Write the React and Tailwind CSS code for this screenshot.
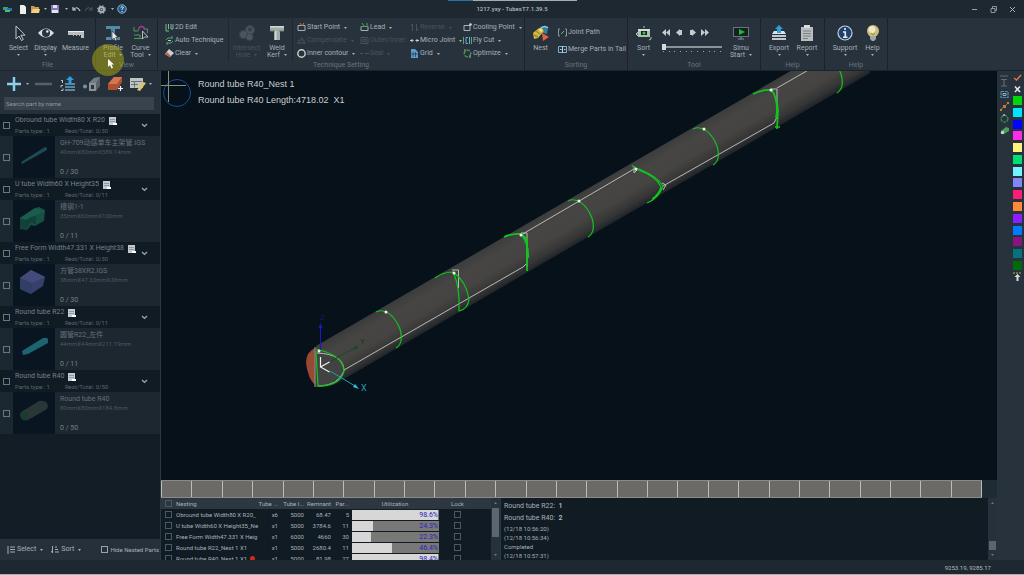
import React from "react";

const Svg = ({ w = 16, h = 16, className = "", children }) => (
  <svg width={w} height={h} viewBox={`0 0 ${w} ${h}`} className={`shrink-0 ${className}`} aria-hidden="true" fill="none">
    {children}
  </svg>
);

const Caret = ({ className = "" }) => (
  <Svg w={3} h={2} className={className}>
    <path d="M0 0h3L1.500 2z" fill="currentColor" />
  </Svg>
);

const Pointer = (
  <path d="M5 1v13l3-3 2.500 4.500 1.800-1-2.400-4.300H14z" fill="#20292f" stroke="#c3c8cb" strokeWidth="1" />
);

const icons = {
  select: Pointer,
  display: (
    <>
      <path d="M0 8Q8-1 16 8Q8 17 0 8z" fill="#d9dcdd" />
      <circle cx="8" cy="8" r="4" fill="#28343d" />
      <circle cx="9.3" cy="6.5" r="1.2" fill="#e8eaea" />
    </>
  ),
  measure: (
    <>
      <path d="M0 6h16v7h-3v-3h-1v1h-1v-1H9v1H8v-1H6v1H5v-1H0z" fill="#b9bdbe" />
      <path d="M0 6h16v1H0z" fill="#eceeee" />
    </>
  ),
  profile: (
    <>
      <path d="M1 1h14v3h-5v8h5v3H1v-3h5V4H1z" fill="#5489a8" />
      <path d="M7 6v9l2-2 1.500 3 1.500-1-1.400-2.700H13z" fill="#e9ecee" stroke="#1b242b" strokeWidth=".6" />
    </>
  ),
  curve: (
    <>
      <path d="M1 2v4h4M1 13.500h9M14.500 8V4h-3" stroke="#4a9c57" />
      <path d="M1 10h6v3.500" stroke="#4a9c57" />
      <path d="M5 6Q6 1 9 1.500Q11.500 2 11.500 5" stroke="#a03a92" strokeWidth="1.400" />
      <path d="M9.500 6v8l2-2h3.500z" fill="#27323c" stroke="#c3c8cb" strokeWidth=".9" />
    </>
  ),
  intersect: (
    <g fill="#4b555e" stroke="#38434c">
      <circle cx="11" cy="5" r="4.500" />
      <circle cx="4.500" cy="9.500" r="4" />
      <circle cx="10.500" cy="12" r="3.500" />
      <circle cx="11" cy="4.500" r="1.800" fill="#333e47" />
    </g>
  ),
  weld: (
    <>
      <path d="M1 1h14v5h-4v9H5V6H1z" fill="#a5aba9" />
      <path d="M1 1h14v1.500H1zM6 6h1.500v9H6z" fill="#d3d6d5" />
      <path d="M1 6h5M10 6h5" stroke="#57886b" />
    </>
  ),
  nest: (
    <>
      <path d="M6 3q5-4 9 0l-1 6-4-1z" fill="#327f9d" />
      <path d="M8 3q4-3 7 0" stroke="#7fcfdf" strokeWidth="1.500" />
      <path d="M0 8l6-5 5 3-6 7-4 1z" fill="#e0b33a" />
      <path d="M3 6l4 3M1 10l4 2" stroke="#7a9b37" strokeWidth="1.500" />
      <circle cx="8" cy="5" r="1.800" fill="#fae27c" />
      <path d="M9 8l7 4-6 4z" fill="#e2643a" />
    </>
  ),
  sort: (
    <>
      <path d="M2 4h12v8H2z" fill="#a9c2ae" />
      <path d="M2 4h12v2H2z" fill="#d2dfd3" />
      <path d="M5 6h6v4H5z" fill="#16261c" />
      <circle cx="8" cy="8" r="1.500" fill="#3cbf5a" />
      <path d="M0 9l2-2v4zM8 1v2M13 15l2-1v-2" stroke="#b5bbbd" />
    </>
  ),
  simu: (
    <>
      <path d="M0 2h16v10H0z" fill="#6b747a" />
      <path d="M1 3h14v8H1z" fill="#14221d" />
      <path d="M6 4l6 3-6 3z" fill="#1fb83c" />
      <path d="M5 14h6M8 12v2" stroke="#89939a" />
    </>
  ),
  export: (
    <>
      <path d="M3 6h10l2 3H1z" fill="#dfe3e4" />
      <path d="M1 10h14v2H1zM1 13h14v2H1z" fill="#c3c8ca" />
      <path d="M8 0l4 4h-2v4H6V4H4z" fill="#2b9ee0" />
    </>
  ),
  report: (
    <>
      <path d="M2 2h12v14H2z" fill="#b9bdbd" />
      <path d="M5 0h6v3H5z" fill="#d9dcdc" />
      <path d="M4 6h8M4 8.500h8M4 11h8M4 13.500h5" stroke="#7a8184" />
    </>
  ),
  support: (
    <>
      <circle cx="8" cy="8" r="7" fill="#1d4168" stroke="#bfd0df" strokeWidth="1.200" />
      <path d="M8 3v2M6 7h2.300v5M6 12.300h4.500" stroke="#e6edf2" strokeWidth="1.600" />
    </>
  ),
  help: (
    <>
      <circle cx="8" cy="6" r="6" fill="#c8bd7c" />
      <circle cx="7" cy="4.500" r="3.500" fill="#ece7c4" />
      <path d="M5 11h6v3l-2 2H7l-2-2z" fill="#9da5aa" />
      <path d="M6 8l2 2 2-2" stroke="#9b8a3a" />
    </>
  ),
};

function BigButton({ icon, lines, caret, disabled, width }) {
  return (
    <button
      type="button"
      disabled={disabled}
      className={`flex flex-col items-center pt-[7px] ${width} ${disabled ? "text-[#48535d]" : "text-[#a9b0b6]"}`}
    >
      <Svg>{icons[icon]}</Svg>
      <span className="mt-[4px] whitespace-nowrap text-center leading-[7px]">
        {lines.map((l, i) => (
          <span key={l} className="block">
            {l}
            {caret && lines.length > 1 && i === lines.length - 1 && <Caret className="ml-1 inline" />}
          </span>
        ))}
      </span>
      {caret && lines.length === 1 && <Caret className="mt-[2px]" />}
    </button>
  );
}

function SmallButton({ icon, label, caret, disabled }) {
  return (
    <button
      type="button"
      disabled={disabled}
      className={`flex h-[13px] items-center gap-px whitespace-nowrap ${disabled ? "text-[#48535d]" : "text-[#a9b0b6]"}`}
    >
      <Svg w={9} h={9}>{icon}</Svg>
      <span>{label}</span>
      {caret && <Caret className="ml-[3px]" />}
    </button>
  );
}

function Group({ caption, width, children }) {
  return (
    <section className={`flex flex-col border-r border-[#1a232b] ${width}`}>
      <div className="flex h-[43px]">{children}</div>
      <h2 className="text-center leading-[9px] text-[#69737c]">{caption}</h2>
    </section>
  );
}

const small = {
  edit: <path d="M1 1v7M3.500 1v5M6 1v5h2V1M1 8h3" stroke="#7fb590" />,
  auto: (
    <>
      <path d="M1 4Q2 1 7 2M8 5Q7 8 2 7M7 0v3M2 9V6" stroke="#4da76a" />
      <path d="M3 4.500h3" stroke="#bcd6c3" />
    </>
  ),
  clear: (
    <>
      <path d="M0 5l4-5 5 4-4 4z" fill="#d6cdca" />
      <path d="M0 5l2-2 4 4-1 1.500z" fill="#b5685e" />
    </>
  ),
  start: (
    <>
      <path d="M1 2.500h7v5H1z" stroke="#a9b0b4" />
      <path d="M3 0l2 3 2-3" stroke="#d07046" />
    </>
  ),
  comp: <path d="M0 7h9M2 7V4h5v3M5 1v3" stroke="#48535d" />,
  inner: <circle cx="4.500" cy="4.500" r="3.700" stroke="#cdd6d0" strokeWidth="1.400" />,
  lead: (
    <>
      <path d="M1 3.500h7v4H1z" stroke="#a9b0b4" />
      <path d="M1 3.500h7M2 0l2 3M7 0v3" stroke="#53a05c" />
    </>
  ),
  outer: <path d="M1 1.500h7v6H1zM3 3.500h3v2H3z" stroke="#48535d" />,
  seal: <path d="M0 4.500h3M5 4.500h4" stroke="#48535d" />,
  reverse: <path d="M2.500 8V1L1 3M6.500 1v7L8 6" stroke="#48535d" />,
  micro: <path d="M0 4.500h3.500M5.500 4.500H9M2 3v3M7 3v3" stroke="#c4cacd" />,
  grid: (
    <>
      <path d="M1 0h4l3 3v6H1z" fill="#5d9ec9" />
      <path d="M3 3v5M5.500 3v5M1 5h7" stroke="#1c3850" strokeWidth=".7" />
    </>
  ),
  cool: (
    <>
      <path d="M1 2.500h6v5H1z" stroke="#a9b0b4" />
      <circle cx="7.500" cy="1.500" r="1.300" fill="#d5dadd" />
    </>
  ),
  fly: (
    <>
      <path d="M.5 1v7M8.500 1v7" stroke="#59aa68" />
      <path d="M5 1.500H3v6h2M6.500 1v7" stroke="#6aaed0" />
    </>
  ),
  opt: (
    <>
      <circle cx="4.500" cy="4.500" r="3.300" stroke="#4f9b55" strokeDasharray="3.500 1.200" strokeWidth="1.300" />
      <path d="M1 1h2M6 8h2" stroke="#d19b4a" />
    </>
  ),
  joint: (
    <>
      <path d="M2 1H.5v7H2M7 1h1.500v7H7" stroke="#8c969c" />
      <path d="M3 6l3-3" stroke="#5fc183" />
    </>
  ),
  merge: (
    <>
      <path d="M.5 1.500h8v6h-8z" stroke="#7db2cf" />
      <path d="M4.500 1v7M2 4.500h1.500M6 4.500h1.500" stroke="#bcd4e1" />
    </>
  ),
};

function TitleBar() {
  return (
    <header className="relative flex h-[18px] items-center justify-between bg-[#1e2831] px-[3px]">
      <div className="absolute left-[448px] top-0 flex h-px w-[129px]">
        <i className="w-[25px] bg-[#2673ab]" />
        <i className="flex-1 bg-[#a5abae]" />
      </div>
      <div className="flex items-center text-[#aab0b4]">
        <Svg w={10} h={9}>
          <path d="M0 2h5v3H0z" fill="#3a9a8f" />
          <path d="M4 3h5v3H4z" fill="#1c75b7" />
          <path d="M2 5h5v2H2z" fill="#53bd57" />
        </Svg>
        <button type="button" aria-label="New" className="ml-[6px]">
          <Svg w={8} h={9}><path d="M1 0h4l2 2v7H1z" fill="#eceeee" /></Svg>
        </button>
        <button type="button" aria-label="Open" className="ml-[4px] flex items-center gap-[4px]">
          <Svg w={9} h={9}>
            <path d="M0 1h3l1 1h4v6H0z" fill="#c99a4e" />
            <path d="M2 4h7L8 8H0z" fill="#f1cf86" />
          </Svg>
          <Caret />
        </button>
        <button type="button" aria-label="Save" className="ml-[4px] flex items-center gap-[5px]">
          <Svg w={9} h={9}>
            <path d="M0 0h8v8H0z" fill="#8179b8" />
            <path d="M2 0h4v3H2zM1 5h6v3H1z" fill="#e3e2ee" />
          </Svg>
          <Caret />
        </button>
        <button type="button" aria-label="Undo" className="ml-[4px]">
          <Svg w={9} h={8}><path d="M1 2v3h3M1 5Q5 0 8 6" stroke="#c3c8ca" strokeWidth="1.200" /></Svg>
        </button>
        <button type="button" aria-label="Redo" disabled className="ml-[3px]">
          <Svg w={9} h={8}><path d="M8 2v3H5M8 5Q4 0 1 6" stroke="#47525b" strokeWidth="1.200" /></Svg>
        </button>
        <button type="button" aria-label="Options" className="ml-[4px] flex items-center gap-[5px]">
          <Svg w={9} h={9}>
            <circle cx="4.500" cy="4.500" r="2.500" stroke="#a9aeb1" strokeWidth="2" />
            <circle cx="4.500" cy="4.500" r="3.800" stroke="#a9aeb1" strokeWidth="1.200" strokeDasharray="1.500 1.500" />
            <circle cx="4.500" cy="4.500" r="1" fill="#a9aeb1" />
          </Svg>
          <Caret />
        </button>
        <button type="button" aria-label="About" className="ml-[3px]">
          <Svg w={10} h={10}>
            <circle cx="5" cy="5" r="4.200" fill="#1d5186" stroke="#8fb3d2" />
            <path d="M3.500 3.800Q5 1.500 6.500 3.500Q6 4.500 5 5.300V6M5 7v1" stroke="#f1f5f8" />
          </Svg>
        </button>
      </div>
      <h1 className="absolute inset-x-0 top-[4px] text-center text-[6px] font-medium leading-[9px] text-[#b5bbbf]">1217.yxy - TubesT7.1.39.5</h1>
      <div className="relative flex items-center gap-[12px] pr-[5px]">
        <button type="button" aria-label="Minimise"><Svg w={7} h={7}><path d="M1 3.500h5" stroke="#9ba2a7" /></Svg></button>
        <button type="button" aria-label="Restore">
          <Svg w={7} h={7}><path d="M1 2.500h4v4H1zM2.500 2V.5h4v4H5" stroke="#aab0b4" strokeWidth=".8" /></Svg>
        </button>
        <button type="button" aria-label="Close"><Svg w={7} h={7}><path d="M1 1l5 5M6 1L1 6" stroke="#b5bbbf" strokeWidth=".9" /></Svg></button>
      </div>
    </header>
  );
}

const MediaButton = ({ label, d }) => (
  <button type="button" aria-label={label} className="flex w-[13px] justify-center">
    <Svg w={8} h={7}><path d={d} fill="#c5cacd" /></Svg>
  </button>
);

function Ribbon() {
  return (
    <nav className="relative flex h-[53px] border-b border-[#1b242c] bg-[#27323c]">
      <Group caption="File" width="w-[96px]">
        <div className="flex pl-[5px]">
          <BigButton icon="select" lines={["Select"]} caret width="w-[27px]" />
          <BigButton icon="display" lines={["Display"]} caret width="w-[27px]" />
          <BigButton icon="measure" lines={["Measure"]} width="w-[33px]" />
        </div>
      </Group>
      <Group caption="View" width="w-[62px]">
        <div className="flex pl-[3px]">
          <BigButton icon="profile" lines={["Profile", "Edit"]} caret width="w-[28px]" />
          <BigButton icon="curve" lines={["Curve", "Tool"]} caret width="w-[27px]" />
        </div>
      </Group>
      <Group caption="Technique Setting" width="w-[367px]">
        <div className="flex w-[71px] flex-col border-r border-[#1e2830] pl-[7px] pt-[3px]">
          <SmallButton icon={small.edit} label="2D Edit" />
          <SmallButton icon={small.auto} label="Auto Technique" />
          <SmallButton icon={small.clear} label="Clear" caret />
        </div>
        <div className="flex w-[64px] border-r border-[#1e2830] pl-[2px]">
          <BigButton icon="intersect" lines={["Intersect", "Hole"]} caret disabled width="w-[31px]" />
          <BigButton icon="weld" lines={["Weld", "Kerf"]} caret width="w-[30px]" />
        </div>
        <div className="grid grid-cols-[63px_50px_53px_58px] content-start pl-[4px] pt-[3px]">
          <SmallButton icon={small.start} label="Start Point" caret />
          <SmallButton icon={small.lead} label="Lead" caret />
          <SmallButton icon={small.reverse} label="Reverse" caret disabled />
          <SmallButton icon={small.cool} label="Cooling Point" caret />
          <SmallButton icon={small.comp} label="Compensate" caret disabled />
          <SmallButton icon={small.outer} label="Outer/Inner" disabled />
          <SmallButton icon={small.micro} label="Micro Joint" caret />
          <SmallButton icon={small.fly} label="Fly Cut" caret />
          <SmallButton icon={small.inner} label="Inner contour" caret />
          <SmallButton icon={small.seal} label="Seal" caret disabled />
          <SmallButton icon={small.grid} label="Grid" caret />
          <SmallButton icon={small.opt} label="Optimize" caret />
        </div>
      </Group>
      <Group caption="Sorting" width="w-[103px]">
        <BigButton icon="nest" lines={["Nest"]} width="w-[31px]" />
        <div className="flex flex-col gap-[4px] pl-[2px] pt-[8px]">
          <SmallButton icon={small.joint} label="Joint Path" />
          <SmallButton icon={small.merge} label="Merge Parts in Tail" />
        </div>
      </Group>
      <Group caption="Tool" width="w-[133px]">
        <BigButton icon="sort" lines={["Sort"]} caret width="w-[31px]" />
        <div className="flex w-[65px] flex-col pt-[11px]">
          <div className="flex">
            <MediaButton label="First" d="M4 0v7L0 3.500zM8 0v7L4 3.500z" />
            <MediaButton label="Previous" d="M5 0v1h2v5H5v1L1 3.500z" />
            <MediaButton label="Next" d="M4 0v1H2v5h2v1l4-3.500z" />
            <MediaButton label="Last" d="M0 0v7l4-3.500zM4 0v7l4-3.500z" />
          </div>
          <input
            type="range"
            aria-label="Simulation progress"
            defaultValue="0"
            className="ml-[3px] mt-[8px] h-[6px] w-[60px] appearance-none bg-[linear-gradient(#89939a,#89939a)] bg-[length:100%_2px] bg-center bg-no-repeat [&::-webkit-slider-thumb]:h-[6px] [&::-webkit-slider-thumb]:w-[4px] [&::-webkit-slider-thumb]:appearance-none [&::-webkit-slider-thumb]:bg-[#d5d9db]"
          />
          <div className="ml-[4px] mt-px flex w-[58px] justify-between">
            {Array.from({ length: 11 }, (_, i) => (
              <i key={i} className="size-px bg-[#9aa2a7]" />
            ))}
          </div>
        </div>
        <BigButton icon="simu" lines={["Simu", "Start"]} caret width="w-[34px]" />
      </Group>
      <Group caption="Help" width="w-[64px]">
        <div className="flex pl-[4px]">
          <BigButton icon="export" lines={["Export"]} caret width="w-[28px]" />
          <BigButton icon="report" lines={["Report"]} caret width="w-[28px]" />
        </div>
      </Group>
      <Group caption="Help" width="w-[63px]">
        <div className="flex pl-[6px]">
          <BigButton icon="support" lines={["Support"]} caret width="w-[28px]" />
          <BigButton icon="help" lines={["Help"]} caret width="w-[27px]" />
        </div>
      </Group>
      <div className="pointer-events-none absolute left-[92px] top-[26px] z-10 size-[32px] rounded-full bg-[#b5ad10]/50" />
      <Svg w={8} h={10} className="pointer-events-none absolute left-[107px] top-[41px] z-20">
        <path d="M1 0v8l2-2 1.500 3.500 1.500-.7L4.500 5.500H7z" fill="#fff" />
      </Svg>
    </nav>
  );
}

const parts = [
  {
    group: "Obround tube Width80 X R20", total: "0/30", name: "GH-709动感单车主架管.IGS", size: "40mmX80mmX589.14mm", count: "0 / 30",
    art: <path d="M8 26L32 11l2 1v2L9 28z" fill="#1c4a56" />,
  },
  {
    group: "U tube Width60 X Height35", total: "0/11", name: "槽钢1-1", size: "35mmX60mmX100mm", count: "0 / 11",
    art: (
      <>
        <path d="M7 18L22 8l4-1 6 3-1 11-9 5-4-1-4 5-7-1z" fill="#175143" />
        <path d="M7 18l6 2 5-3 5-1v9l-5-3-5 8-6-2z" fill="#124237" />
        <path d="M7 18L22 8l10 3-14 6-5 3z" fill="#1c5c4c" />
      </>
    ),
  },
  {
    group: "Free Form Width47.331 X Height38", total: "0/30", name: "方管38XR2.IGS", size: "38mmX47.33mmX38mm", count: "0 / 30",
    art: (
      <>
        <path d="M7 14L18 6l14 7-2 9-12 8-11-5z" fill="#37406c" />
        <path d="M7 14l12 5-1 11-11-5z" fill="#2f3f66" />
        <path d="M7 14L18 6l14 7-13 6z" fill="#454a7c" />
      </>
    ),
  },
  {
    group: "Round tube R22", total: "0/11", name: "圆管R22_左件", size: "44mmX44mmX211.19mm", count: "0 / 11",
    art: <path d="M9 23L30 10q4-1 5 1v4L15 26l-5 1z" fill="#1d6470" />,
  },
  {
    group: "Round tube R40", total: "0/50", name: "Round tube R40", size: "80mmX80mmX184.8mm", count: "0 / 50",
    art: (
      <>
        <path d="M8 20L26 9q8-1 9 5l-1 3-19 11q-8 2-7-8z" fill="#2b3638" />
        <path d="M7 22q2-5 7-1 3 4 1 7-8 2-8-6z" fill="#1d3a30" />
      </>
    ),
  },
];

const boxClass = "size-[7px] shrink-0 appearance-none border border-[#6a757e] checked:bg-[#6a757e]";

function PartsPanel() {
  return (
    <aside className="flex w-[161px] shrink-0 flex-col border-r border-[#2b3741] bg-[#131d26]">
      <div className="flex flex-col bg-[#25303a] pb-[4px]">
        <div className="flex h-[26px] items-center pl-[6px] text-[#a9b0b6]">
          <button type="button" aria-label="Add part" className="flex items-center gap-[4px]">
            <Svg w={16} h={16}><path d="M8 1v14M1 8h14" stroke="#8bd0ea" strokeWidth="2.500" /></Svg>
            <Caret />
          </button>
          <button type="button" aria-label="Remove part" className="ml-[6px]">
            <Svg w={17} h={16}><path d="M0 8h17" stroke="#56616a" strokeWidth="2.500" /></Svg>
          </button>
          <button type="button" aria-label="Import quantities" className="ml-[8px]">
            <Svg w={16} h={16}>
              <path d="M2.500 4v3M1 4.500h1.500M1 9.500h2M1 9.500v2M1 14.500h2v-2" stroke="#b9c0c4" />
              <path d="M5 7h10v2H5zM5 10h10v2H5zM5 13h10v2H5z" fill="#5a86a2" />
              <path d="M10 0l4 4h-2.500v4h-3V4H6z" fill="#2b9ee0" />
            </Svg>
          </button>
          <button type="button" aria-label="Standard part" className="ml-[7px]">
            <Svg w={17} h={16}>
              <path d="M6 7l5-5 6-1v9l-4 5H6z" fill="#596268" />
              <path d="M6 7l5-5 6-1-4 6z" fill="#737c81" />
              <path d="M6 7h7v8H6z" fill="#8a9297" />
              <path d="M8 9h3v4H8z" fill="#2c363f" />
              <circle cx="2" cy="10.500" r="2" fill="#6f97ab" />
            </Svg>
          </button>
          <button type="button" aria-label="New part" className="ml-[7px]">
            <Svg w={17} h={16}>
              <path d="M1 8l6-7h8v5l-5 8H1z" fill="#b05033" />
              <path d="M1 8l6-7h8l-5 7z" fill="#d3764f" />
              <path d="M13.500 10v5M11 12.500h5" stroke="#f2f4f4" strokeWidth="1.200" />
            </Svg>
          </button>
          <button type="button" aria-label="Edit list" className="ml-[6px] flex items-center gap-[2px]">
            <Svg w={17} h={16}>
              <path d="M0 2h13v10H0z" fill="#c0c4c0" />
              <path d="M1 5.500h11M1 8.500h7M4.500 5.500v6" stroke="#667078" />
              <path d="M7 14l6-8 3 1-6 8z" fill="#dbc368" />
            </Svg>
            <Caret />
          </button>
        </div>
        <input
          type="search"
          aria-label="Search part by name"
          placeholder="Search part by name"
          className="ml-[4px] mr-[6px] h-[13px] min-w-0 bg-[#38434d] px-[2px] text-[6px] text-[#a9b0b6] outline-none placeholder:text-[#8e979e]"
        />
      </div>
      <ul className="flex-1 overflow-hidden text-[#5b6670]">
        {parts.map((p) => (
          <li key={p.group}>
            <div className="flex h-[22px] items-center bg-[#111b24] pl-[3px] pr-[12px]">
              <input type="checkbox" aria-label={p.group} className={boxClass} />
              <div className="ml-[5px] min-w-0 flex-1">
                <h3 className="flex items-center gap-[4px] whitespace-nowrap leading-[11px] text-[#75808a]">
                  {p.group}
                  <Svg w={8} h={8}>
                    <path d="M0 0h7v8H0z" fill="#c3c9cc" />
                    <path d="M1 2.500h5M1 4.500h5" stroke="#79838a" strokeWidth=".7" />
                    <path d="M4 6h4v2H4z" fill="#fff" />
                  </Svg>
                </h3>
                <p className="flex gap-[15px] text-[6px] leading-[9px]">
                  <span>Parts type:: 1</span>
                  <span>Rest/Total: {p.total}</span>
                </p>
              </div>
              <button type="button" aria-label={`Collapse ${p.group}`}>
                <Svg w={7} h={5}><path d="M1 1l2.500 2.500L6 1" stroke="#a3abb1" strokeWidth="1.200" /></Svg>
              </button>
            </div>
            <div className="flex h-[42px] items-center bg-[#1d2730] pl-[3px]">
              <input type="checkbox" aria-label={p.name} className={boxClass} />
              <Svg w={42} h={42} className="ml-[3px] bg-[#091520]">{p.art}</Svg>
              <div className="flex h-full min-w-0 flex-1 flex-col whitespace-nowrap pb-[2px] pl-[5px] pt-[2px]">
                <span className="leading-[10px] text-[#65707a]">{p.name}</span>
                <span className="text-[6px] leading-[8px] text-[#4b5660]">{p.size}</span>
                <span className="mt-auto leading-[8px] text-[#75808a]">{p.count}</span>
              </div>
            </div>
          </li>
        ))}
      </ul>
      <div className="flex h-[21px] items-center whitespace-nowrap bg-[#25303a] pl-[7px] text-[#a9b0b6]">
        <button type="button" className="flex items-center gap-[2px]">
          <Svg w={8} h={8}><path d="M1 0v8M3 1h5M3 3.500h5M3 6h5" stroke="#a5adb2" /></Svg>
          Select
          <Caret className="ml-[2px]" />
        </button>
        <button type="button" className="ml-[8px] flex items-center gap-[2px]">
          <Svg w={8} h={8}><path d="M1.500 0v7L0 5M4 1h2M4 3.500h3M4 6h4" stroke="#a5adb2" /></Svg>
          Sort
          <Caret className="ml-[2px]" />
        </button>
        <label className="ml-auto flex items-center gap-[2px] pr-px text-[6px]">
          <input type="checkbox" className="size-[7px] appearance-none border border-[#9aa3a9] checked:bg-[#9aa3a9]" />
          Hide Nested Parts
        </label>
      </div>
    </aside>
  );
}

const ringStarts = [[376, 312], [568, 201], [693, 129], [817, 57]];

function Viewport() {
  return (
    <div className="relative min-h-0 flex-1 overflow-hidden bg-[#07111a]">
      <svg className="absolute inset-0 size-full" role="img" aria-label="Nested tube model" fill="none">
        <defs>
          <linearGradient id="tube" gradientUnits="userSpaceOnUse" x1="400" y1="298" x2="421" y2="334">
            <stop offset="0" stopColor="#3b3c3c" />
            <stop offset=".25" stopColor="#464544" />
            <stop offset=".6" stopColor="#454442" />
            <stop offset=".85" stopColor="#363636" />
            <stop offset="1" stopColor="#22262a" />
          </linearGradient>
        </defs>
        <g transform="translate(-161 -71)">
          <path d="M316 346L870 25v48L344 379Q334 388 315 387z" fill="url(#tube)" />
          <path d="M315 348q-9 4-9 15 2 16 9 22z" fill="#984934" />
          <path d="M315 348v39q18 1 29-14-2-18-29-25z" fill="#414342" />
          <g stroke="#b9b9b5" strokeWidth="1">
            <path d="M344 370L523 267M521 235L634 169M663 186L774 123M777 88L812 68" />
            <path d="M317 353Q344 354 344 371Q338 386 318 386M452 270h6.500v18M521 233h6v34M523 267l4-4M634 166v7l3-3M774 123l4-8M771 89h6v30M663 190l3-5-4-2" />
          </g>
          <path d="M315 347v40" stroke="#8b9290" />
          <g stroke="#10c51e" strokeWidth="1.200">
            {ringStarts.map(([x, y]) => (
              <path key={x} d={`M${x} ${y}c8-4 18 2 24 17q4 14-4 19`} />
            ))}
            <path d="M316 349Q343 355 344 371Q340 386 318 386L316 351" />
            <path d="M435 278Q443 272 453 272Q466 281 469 299Q468 309 459 311Q460 288 454 274" />
            <path d="M504 237Q512 233 522 234L527 240V271M522 235Q529 245 528 258" strokeWidth="1.800" />
            <path d="M632 165Q634 168 639 169Q658 177 663 186Q659 198 647 203M638 170Q656 176 661 187Q659 194 652 199" />
            <path d="M753 94Q764 89 771 90Q777 96 778 110L777 129M772 90Q779 102 776 118M775 127h5" strokeWidth="1.700" />
          </g>
          <g fill="#f0f2ee">
            {[[386, 312], [454, 273], [521, 235], [579, 201], [636, 169], [704, 129], [771, 90], [319, 351]].map(([x, y]) => (
              <circle key={x} cx={x} cy={y} r="1.500" />
            ))}
          </g>
          <path d="M320.500 350V327" stroke="#1b18c7" />
          <path d="M318.500 328l2-5 2 5z" fill="#1b18c7" />
          <path d="M331 361l24-13M355 349l3-2" stroke="#174a20" />
          <path d="M353 347l5-1-3 4z" fill="#174a20" />
          <path d="M330 371l25 15" stroke="#269dae" />
          <path d="M353 387l2-3 4 5z" fill="#2fc3d4" />
          <path d="M320.500 357v10l9 5M320.500 367l9-5" stroke="#f2f4f2" strokeWidth="1.200" />
          <text x="320" y="320" className="fill-[#16166e] text-[8px]">Z</text>
          <text x="361" y="391" className="fill-[#289fb2] text-[9px]">X</text>
          <text x="360" y="344" className="fill-[#123a1a] text-[8px]">Y</text>
          <circle cx="177" cy="93" r="13.500" stroke="#1a4b97" />
          <path d="M168.500 71v31M161 85.500h25" stroke="#87917f" />
        </g>
      </svg>
      <div className="relative pl-[37px] pt-[5px] [font-family:'Liberation_Sans',Arial,sans-serif] text-[9px] leading-[16px] text-[#c9cdcf]">
        <p>Round tube R40_Nest 1</p>
        <p className="whitespace-pre">Round tube R40 Length:4718.02  X1</p>
      </div>
    </div>
  );
}

const nestings = [
  ["Obround tube Width80 X R20_", "x6", "5000", "68.47", "5", 98.6],
  ["U tube Width60 X Height35_Ne", "x1", "5000", "3784.6", "11", 24.3],
  ["Free Form Width47.331 X Heig", "x1", "6000", "4660", "30", 22.3],
  ["Round tube R22_Nest 1 X1", "x1", "5000", "2680.4", "11", 46.4],
  ["Round tube R40_Nest 1 X1", "x1", "5000", "81.98", "27", 98.4],
];

const rowBox = "block size-[7px] appearance-none border border-[#4b5761] checked:bg-[#4b5761]";

function ScrollBar({ before, thumb }) {
  return (
    <div className="flex w-[9px] shrink-0 flex-col items-center bg-[#26313b] py-[4px] text-[#6d7780]">
      <Caret className="rotate-180" />
      <div className={before} />
      <div className={`w-[7px] bg-[#5b6670] ${thumb}`} />
      <Caret className="mt-auto" />
    </div>
  );
}

function NestingTable() {
  return (
    <div className="flex w-[340px] shrink-0 overflow-hidden border-r border-[#2b3741] bg-[#111b24]">
      <div className="min-w-0 flex-1 overflow-hidden">
        <table className="w-full table-fixed border-collapse whitespace-nowrap text-right text-[6px] leading-[11px] text-[#a9b0b6]">
          <colgroup>
            <col className="w-[15px]" />
            <col />
            <col className="w-[23px]" />
            <col className="w-[26px]" />
            <col className="w-[27px]" />
            <col className="w-[20px]" />
            <col className="w-[88px]" />
            <col className="w-[52px]" />
          </colgroup>
          <thead>
            <tr className="h-[11px] bg-[#2c3741]">
              <th className="p-0 pl-[4px]"><input type="checkbox" aria-label="Select all nestings" className={rowBox} /></th>
              <th className="p-0 text-left font-normal">Nesting</th>
              <th className="p-0 font-normal">Tube ...</th>
              <th className="p-0 font-normal">Tube l...</th>
              <th className="p-0 font-normal">Remnant</th>
              <th className="p-0 pr-[2px] font-normal">Par...</th>
              <th className="p-0 text-center font-normal">Utilization</th>
              <th className="p-0 pr-[15px] text-center font-normal">Lock</th>
            </tr>
          </thead>
          <tbody>
            {nestings.map(([name, qty, len, rem, n, use]) => (
              <tr key={name} className="h-[11px]">
                <td className="p-0 pl-[4px]"><input type="checkbox" aria-label={name} className={rowBox} /></td>
                <td className="p-0 text-left">
                  {name}
                  {n === "27" && <i className="ml-[3px] inline-block size-[5px] rounded-full bg-[#d5281e]" />}
                </td>
                <td className="p-0">{qty}</td>
                <td className="p-0">{len}</td>
                <td className="p-0">{rem}</td>
                <td className="p-0 pr-[2px]">{n}</td>
                <td className="p-0 pl-px">
                  <div className="relative h-[10px] bg-[#787876] text-[#2a22c4]">
                    <div className="absolute inset-y-0 left-0 bg-[#d6d7d6]" style={{ width: `${use}%` }} />
                    <span className="relative block pr-px text-[7px] leading-[10px]">{use}%</span>
                  </div>
                </td>
                <td className="p-0 pl-[15px]"><input type="checkbox" aria-label={`Lock ${name}`} className={rowBox} /></td>
              </tr>
            ))}
          </tbody>
        </table>
      </div>
      <ScrollBar before="h-[4px]" thumb="h-[29px]" />
    </div>
  );
}

function Log() {
  return (
    <div className="flex min-w-0 flex-1 overflow-hidden bg-[#111b24]">
      <div className="flex-1 pl-[3px] pt-[2px] text-[#a9b0b6]">
        <p className="whitespace-pre leading-[12px]">Round tube R22:  <b>1</b></p>
        <p className="whitespace-pre leading-[12px]">Round tube R40:  <b>2</b></p>
        <div className="text-[6px] leading-[9px]">
          <p>(12/18 10:56:20)</p>
          <p>(12/18 10:56:34)</p>
          <p>Completed</p>
          <p>(12/18 10:57:31)</p>
        </div>
      </div>
      <ScrollBar before="h-[37px]" thumb="h-[9px]" />
    </div>
  );
}

const swatches = [
  ["Green", "bg-[#00d60b]"], ["Cyan", "bg-[#00e5ff]"], ["Blue", "bg-[#0005ff]"], ["Magenta", "bg-[#ff2bea]"],
  ["Yellow", "bg-[#fff080]"], ["Mint", "bg-[#00df73]"], ["Sky", "bg-[#73f2ff]"], ["Lavender", "bg-[#8286f5]"],
  ["Rose", "bg-[#ff1c77]"], ["Orange", "bg-[#ff8936]"], ["Violet", "bg-[#8a1eff]"], ["Azure", "bg-[#007bff]"],
  ["Purple", "bg-[#86157e]"], ["Teal", "bg-[#08707e]"], ["Dark green", "bg-[#006b08]"],
];

function LayerBar() {
  return (
    <aside className="flex w-[27px] shrink-0 justify-between bg-[#27323c] pl-[2px] pr-[2px]">
      <div className="flex flex-col items-center gap-[3px] pt-[4px]">
        <button type="button" aria-label="Profile view">
          <Svg w={10} h={12}><path d="M1 1h8M2 4.500h6M5 4v7M2 11h6" stroke="#5f6a73" strokeWidth="1.200" /></Svg>
        </button>
        <button type="button" aria-label="Fit view">
          <Svg w={9} h={9}>
            <path d="M1 1.500h7v6H1z" stroke="#4f8fa9" strokeWidth="1.200" strokeDasharray="3 .7" />
            <path d="M3 3.500h3v2H3z" stroke="#a7cbd8" strokeWidth=".8" />
          </Svg>
        </button>
        <button type="button" aria-label="Show path">
          <Svg w={9} h={9}>
            <path d="M1 7.500L8 1" stroke="#5b8f43" />
            <path d="M3 3h3v3H3z" fill="#e06a2c" />
            <path d="M0 7h2v2H0zM7 0h2v2H7z" fill="#b8862f" />
          </Svg>
        </button>
        <button type="button" aria-label="Show contour">
          <Svg w={9} h={9}>
            <circle cx="4.500" cy="4.800" r="3.400" stroke="#3f9153" strokeWidth="1.200" strokeDasharray="3 .8" />
            <circle cx="4" cy="1" r="1" fill="#a9c7af" />
          </Svg>
        </button>
        <button type="button" aria-label="Show solid">
          <Svg w={9} h={9}>
            <path d="M1 5l5-4 3 1v3L4 8H1z" fill="#4d9d5f" />
            <circle cx="2.500" cy="6.500" r="1.700" fill="#bcd9bf" />
          </Svg>
        </button>
      </div>
      <div className="flex flex-col items-center pt-[2px]">
        <button type="button" aria-label="Show all layers">
          <Svg w={9} h={9}><path d="M1 5l2.500 2L8 2" stroke="#e0784e" strokeWidth="1.400" /></Svg>
        </button>
        <button type="button" aria-label="Hide all layers" className="mt-[3px]">
          <Svg w={9} h={9}><path d="M2 1.500l5 5.500M7 1.500L2 7" stroke="#e6e9ea" strokeWidth="1.500" /></Svg>
        </button>
        <div className="mt-[2px] flex h-[174px] flex-col justify-between">
          {swatches.map(([name, color]) => (
            <button key={name} type="button" aria-label={name} className={`size-[9px] ${color}`} />
          ))}
        </div>
        <button type="button" aria-label="Move to top" className="mt-[2px]">
          <Svg w={9} h={10}>
            <path d="M0 1h9" stroke="#c2a64d" strokeDasharray="2 1" />
            <path d="M4.500 2l3 3h-2v4h-2V5h-2z" fill="#d8dcdd" />
          </Svg>
        </button>
      </div>
    </aside>
  );
}

export default function App() {
  return (
    <div className="flex h-screen flex-col overflow-hidden bg-[#1e2831] [font-family:Roboto,'Noto_Sans_CJK_SC',sans-serif] text-[7px]">
      <TitleBar />
      <Ribbon />
      <div className="flex min-h-0 flex-1">
        <PartsPanel />
        <main className="flex min-w-0 flex-1 flex-col">
          <Viewport />
          <div className="flex h-[18px] bg-[#1e2a34] pr-[15px]">
            <div className="flex flex-1 border-y border-[#8a8a87] bg-[#6b6a67]">
              {Array.from({ length: 27 }, (_, i) => (
                <i key={i} className="flex-1 border-r border-[#bcbcb9] first:border-l" />
              ))}
            </div>
          </div>
          <div className="flex h-[62px]">
            <NestingTable />
            <Log />
          </div>
        </main>
        <LayerBar />
      </div>
      <footer className="flex h-[15px] items-center justify-end border-b border-[#a9aeb1] bg-[#1e2831] pr-[33px] text-[6px] text-[#b5bbbf]">
        9253.19, 9285.17
      </footer>
    </div>
  );
}
